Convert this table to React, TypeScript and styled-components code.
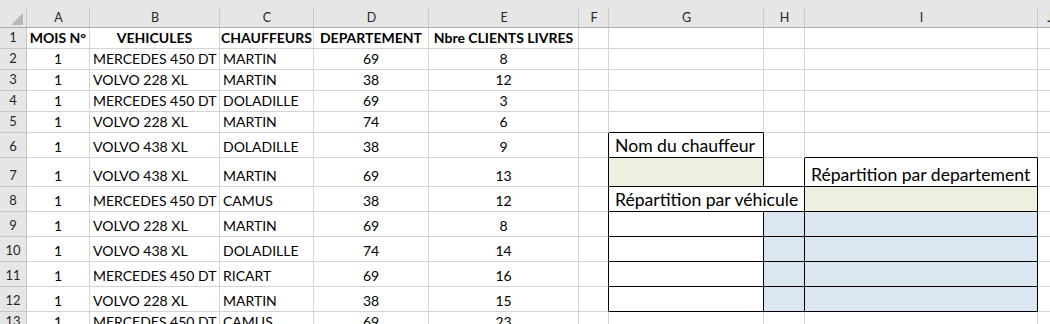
import styled, { createGlobalStyle } from "styled-components";

const GlobalStyle = createGlobalStyle`
  html, body {
    margin: 0;
    padding: 0;
    background: #ffffff;
    overflow: hidden;
  }
  body {
    font-family: Lato, "Liberation Sans", sans-serif;
    color: #000;
  }
`;

const GRID = "#d4d4d4";
const INK = "#000000";
const GREEN = "#ebf1de";
const BLUE = "#dce6f1";

type Align = "left" | "center";

const COLUMNS = [
  { key: "A", width: 63, align: "center" as Align },
  { key: "B", width: 130, align: "left" as Align },
  { key: "C", width: 94, align: "left" as Align },
  { key: "D", width: 115, align: "center" as Align },
  { key: "E", width: 150, align: "center" as Align },
  { key: "F", width: 30, align: "left" as Align },
  { key: "G", width: 155, align: "left" as Align },
  { key: "H", width: 41, align: "left" as Align },
  { key: "I", width: 233, align: "left" as Align },
  { key: "J", width: 24, align: "left" as Align },
];

const ROW_HEIGHTS = [21, 21, 21, 21, 21, 25, 29, 25, 25, 25, 25, 25, 21];

const TITLES = ["MOIS N°", "VEHICULES", "CHAUFFEURS", "DEPARTEMENT", "Nbre CLIENTS LIVRES"];

const DELIVERIES = [
  ["1", "MERCEDES 450 DT", "MARTIN", "69", "8"],
  ["1", "VOLVO 228 XL", "MARTIN", "38", "12"],
  ["1", "MERCEDES 450 DT", "DOLADILLE", "69", "3"],
  ["1", "VOLVO 228 XL", "MARTIN", "74", "6"],
  ["1", "VOLVO 438 XL", "DOLADILLE", "38", "9"],
  ["1", "VOLVO 438 XL", "MARTIN", "69", "13"],
  ["1", "MERCEDES 450 DT", "CAMUS", "38", "12"],
  ["1", "VOLVO 228 XL", "MARTIN", "69", "8"],
  ["1", "VOLVO 438 XL", "DOLADILLE", "74", "14"],
  ["1", "MERCEDES 450 DT", "RICART", "69", "16"],
  ["1", "VOLVO 228 XL", "MARTIN", "38", "15"],
  ["1", "MERCEDES 450 DT", "CAMUS", "69", "23"],
];

// the little form drawn in G6:I12 (thin black borders, filled input cells)
const FORM: Record<string, { text?: string; fill?: string; span?: number }> = {
  "G6": { text: "Nom du chauffeur" },
  "G7": { fill: GREEN },
  "I7": { text: "Répartition par departement" },
  "G8": { text: "Répartition par véhicule", span: 2 },
  "I8": { fill: GREEN },
};
for (let r = 9; r <= 12; r++) {
  FORM[`H${r}`] = { fill: BLUE };
  FORM[`I${r}`] = { fill: BLUE };
}

const inkRight = (col: string, row: number) => {
  if (col === "F") return row >= 6 && row <= 12;
  if (col === "G") return row === 6 || row === 7 || (row >= 9 && row <= 12);
  if (col === "H" || col === "I") return row >= 7 && row <= 12;
  return false;
};

const inkBottom = (col: string, row: number) => {
  if (row === 5) return col === "G";
  if (row === 6) return col === "G" || col === "I";
  if (row >= 7 && row <= 12) return col === "G" || col === "H" || col === "I";
  return false;
};

const Sheet = styled.div<{ $cols: string; $rows: string }>`
  display: grid;
  grid-template-columns: ${(p) => p.$cols};
  grid-template-rows: ${(p) => p.$rows};
  width: max-content;
`;

const HeadBase = styled.div`
  box-sizing: border-box;
  display: flex;
  background: linear-gradient(#c8c8c8, #c8c8c8) right 8px / 1px calc(100% - 8px) no-repeat, #e6e6e6;
  border-bottom: 1px solid #ababab;
  color: #262626;
`;

const Corner = styled(HeadBase)`
  align-items: flex-end;
  justify-content: flex-end;
  padding: 0 4px 2px 0;
`;

const ColumnHead = styled(HeadBase)`
  align-items: center;
  justify-content: center;
  padding-top: 8px;
  font-size: 12.5px;
  overflow: hidden;
`;

const RowHead = styled.div`
  box-sizing: border-box;
  display: flex;
  align-items: flex-end;
  justify-content: center;
  padding-bottom: 2px;
  background: #e6e6e6;
  border-right: 1px solid #c6c6c6;
  border-bottom: 1px solid #c6c6c6;
  color: #262626;
  font-size: 13px;
  line-height: 17px;
`;

const Cell = styled.div<{
  $align: Align;
  $bold?: boolean;
  $large?: boolean;
  $fill?: string;
  $right: string;
  $bottom: string;
  $span?: number;
}>`
  box-sizing: border-box;
  display: flex;
  align-items: flex-end;
  justify-content: ${(p) => (p.$align === "center" ? "center" : "flex-start")};
  grid-column: span ${(p) => p.$span ?? 1};
  padding: 0 ${(p) => (p.$large ? "6px" : "3px")} 1px;
  background: ${(p) => p.$fill ?? "#ffffff"};
  border-right: 1px solid ${(p) => p.$right};
  border-bottom: 1px solid ${(p) => p.$bottom};
  font-size: ${(p) => (p.$large ? "17.6px" : "14px")};
  font-weight: ${(p) => (p.$bold ? 700 : 400)};
  line-height: ${(p) => (p.$large ? "20px" : "18px")};
  white-space: nowrap;
  overflow: hidden;
`;

function SelectAllTriangle() {
  return (
    <svg width="12" height="12" viewBox="0 0 12 12">
      <polygon points="12,0 12,12 0,12" fill="#b7b7b7" />
    </svg>
  );
}

function cellFor(col: (typeof COLUMNS)[number], row: number) {
  const key = `${col.key}${row}`;
  const right = inkRight(col.key, row) ? INK : GRID;
  const bottom = inkBottom(col.key, row) ? INK : GRID;

  if (row === 8 && col.key === "H") return null; // covered by G8

  const form = FORM[key];
  if (form) {
    const span = form.span ?? 1;
    const spanRight = span > 1 && inkRight("H", row) ? INK : right;
    return (
      <Cell
        key={key}
        $align="left"
        $large
        $fill={form.fill}
        $right={spanRight}
        $bottom={bottom}
        $span={span}
      >
        {form.text}
      </Cell>
    );
  }

  const idx = COLUMNS.indexOf(col);
  let text = "";
  if (idx < 5) text = row === 1 ? TITLES[idx] : DELIVERIES[row - 2]?.[idx] ?? "";

  return (
    <Cell
      key={key}
      $align={row === 1 && idx < 5 ? "center" : col.align}
      $bold={row === 1}
      $right={right}
      $bottom={bottom}
    >
      {text}
    </Cell>
  );
}

export default function App() {
  const cols = ["27px", ...COLUMNS.map((c) => `${c.width}px`)].join(" ");
  const rows = ["28px", ...ROW_HEIGHTS.map((h) => `${h}px`)].join(" ");

  return (
    <>
      <GlobalStyle />
      <Sheet $cols={cols} $rows={rows}>
        <Corner>
          <SelectAllTriangle />
        </Corner>
        {COLUMNS.map((c) => (
          <ColumnHead key={c.key}>{c.key}</ColumnHead>
        ))}
        {ROW_HEIGHTS.map((_, i) => {
          const row = i + 1;
          return [
            <RowHead key={`r${row}`}>{row}</RowHead>,
            ...COLUMNS.map((c) => cellFor(c, row)),
          ];
        })}
      </Sheet>
    </>
  );
}
